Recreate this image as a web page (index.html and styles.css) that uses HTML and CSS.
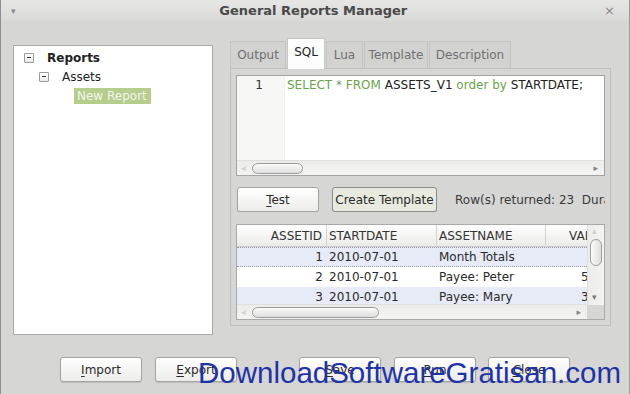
FILE: index.html
```html
<!DOCTYPE html>
<html>
<head>
<meta charset="utf-8">
<link rel="stylesheet" href="styles.css">
</head>
<body>
<div class="window">
  <div class="titlebar">
    <span class="menu-arrow">▾</span>
    <span class="title">General Reports Manager</span>
    <span class="close-x">×</span>
  </div>
  <div class="content">
    <div class="tree">
      <div class="tree-row lvl0"><span class="expander"></span><span class="tree-label bold">Reports</span></div>
      <div class="tree-row lvl1"><span class="expander"></span><span class="tree-label">Assets</span></div>
      <div class="tree-row lvl2"><span class="tree-label selected">New Report</span></div>
    </div>
    <div class="right">
      <div class="tabs">
        <div class="tab t-output">Output</div>
        <div class="tab active t-sql">SQL</div>
        <div class="tab t-lua">Lua</div>
        <div class="tab t-template">Template</div>
        <div class="tab t-desc">Description</div>
      </div>
      <div class="panel">
        <div class="editor">
          <div class="editor-body">
            <div class="gutter"><span class="lineno">1</span></div>
            <div class="code"><span class="kw">SELECT</span> <span class="star">*</span> <span class="kw">FROM</span> ASSETS_V1 <span class="kw">order by</span> STARTDATE;</div>
          </div>
          <div class="hscroll">
            <span class="arr-l">◂</span>
            <span class="thumb-h ed-thumb"></span>
            <span class="arr-r">▸</span>
          </div>
        </div>
        <div class="controls">
          <button class="btn btn-test"><u>T</u>est</button>
          <button class="btn btn-create">Create Template</button>
          <span class="status">Row(s) returned: 23&nbsp;&nbsp;Duration: 0.01s</span>
        </div>
        <div class="grid">
          <div class="grid-main">
            <div class="viewport">
              <div class="grow ghead">
                <div class="c c1">ASSETID</div>
                <div class="c c2">STARTDATE</div>
                <div class="c c3">ASSETNAME</div>
                <div class="c c4 h4">VALUE</div>
              </div>
              <div class="grow alt focus">
                <div class="c c1">1</div>
                <div class="c c2">2010-07-01</div>
                <div class="c c3">Month Totals</div>
                <div class="c c4"></div>
              </div>
              <div class="grow">
                <div class="c c1">2</div>
                <div class="c c2">2010-07-01</div>
                <div class="c c3">Payee: Peter</div>
                <div class="c c4 v4">57.00</div>
              </div>
              <div class="grow alt">
                <div class="c c1">3</div>
                <div class="c c2">2010-07-01</div>
                <div class="c c3">Payee: Mary</div>
                <div class="c c4 v4">32.00</div>
              </div>
            </div>
            <div class="hscroll tbl-h">
              <span class="arr-l">◂</span>
              <span class="thumb-h tb-thumb"></span>
              <span class="arr-r">▸</span>
            </div>
          </div>
          <div class="grid-side">
            <div class="vscroll">
              <span class="arr-u">▴</span>
              <span class="thumb-v"></span>
              <span class="arr-d">▾</span>
            </div>
            <div class="corner"></div>
          </div>
        </div>
      </div>
    </div>
  </div>
  <div class="bottom">
    <button class="btn b-import"><u>I</u>mport</button>
    <button class="btn b-export"><u>E</u>xport</button>
    <button class="btn b-save"><u>S</u>ave</button>
    <button class="btn b-run"><u>R</u>un</button>
    <button class="btn b-close"><u>C</u>lose</button>
  </div>
  <div class="watermark">DownloadSoftwareGratisan.com</div>
</div>
</body>
</html>
```
FILE: styles.css
```css
* { box-sizing: border-box; }
html, body { margin: 0; padding: 0; }
body {
  width: 630px;
  height: 394px;
  overflow: hidden;
  background: #d6d6d4;
  font-family: "DejaVu Sans", sans-serif;
  font-size: 12px;
  color: #2e2e2e;
}
.window {
  position: relative;
  width: 630px;
  height: 394px;
  border-left: 1px solid #8e8e8c;
  border-right: 1px solid #9a9a98;
  background: #d6d6d4;
}
.titlebar {
  height: 21px;
  display: flex;
  align-items: center;
  justify-content: space-between;
  padding: 0 14px 0 10px;
  background: linear-gradient(#e6e6e4, #d9d9d7);
}
.title {
  font-weight: bold;
  font-size: 13px;
  color: #4a4a4a;
  margin-left: 7px;
}
.menu-arrow { color: #8a8a8a; font-size: 9px; }
.close-x { color: #8a8a8a; font-size: 13px; }

.content {
  display: flex;
  align-items: flex-start;
  padding-left: 12px;
  margin-top: 17px;
}
.tree {
  width: 200px;
  height: 290px;
  margin-top: 7px;
  background: #fff;
  border: 1px solid #a9a9a7;
  padding-top: 2px;
}
.tree-row {
  height: 19px;
  display: flex;
  align-items: center;
}
.lvl0 { padding-left: 10px; }
.lvl1 { padding-left: 25px; }
.lvl2 { padding-left: 60px; }
.expander {
  width: 10px;
  height: 10px;
  border: 1px solid #9a9a9a;
  border-radius: 1px;
  background: linear-gradient(#fff, #eaeaea);
  position: relative;
  margin-right: 13px;
}
.expander::after {
  content: "";
  position: absolute;
  left: 2px;
  top: 3px;
  width: 4px;
  height: 1px;
  background: #333;
}
.bold { font-weight: bold; color: #111; }
.tree-label { color: #222; }
.selected {
  background: #b5cd8d;
  color: #f2f6ea;
  padding: 1px 4px 1px 3px;
  line-height: 14px;
}

.right {
  margin-left: 17px;
  width: 381px;
}
.tabs {
  display: flex;
  height: 30px;
  align-items: flex-end;
  position: relative;
  z-index: 2;
}
.tab {
  flex: none;
  height: 27px;
  display: flex;
  align-items: center;
  justify-content: center;
  color: #707070;
  background: #d2d2d0;
  border: 1px solid #c4c4c2;
  border-bottom: none;
  margin-right: 1px;
}
.t-output { width: 56px; }
.t-sql { width: 38px; }
.t-lua { width: 37px; }
.t-template { width: 64px; }
.t-desc { width: 82px; }
.tab.active {
  height: 31px;
  margin-bottom: -1px;
  background: #fdfdfd;
  color: #222;
  border-color: #c8c8c6;
  align-items: flex-start;
  padding-top: 6px;
}
.panel {
  border: 1px solid #bebebc;
  height: 258px;
  padding: 6px 0 0 5px;
  background: #d6d6d4;
}
.editor {
  width: 369px;
  height: 101px;
  border: 1px solid #a3a3a1;
  background: #fff;
  display: flex;
  flex-direction: column;
}
.editor-body {
  flex: 1;
  display: flex;
}
.gutter {
  width: 48px;
  background: #f7f7f6;
  border-right: 1px solid #f0f0ef;
  display: flex;
  justify-content: flex-end;
  padding: 2px 21px 0 0;
}
.code {
  padding: 2px 0 0 2px;
  color: #222;
  white-space: nowrap;
}
.lineno { color: #333; }
.kw { color: #6aa34a; }
.star { color: #7a9a6a; }

.hscroll {
  height: 15px;
  flex: none;
  background: linear-gradient(#ececea, #f4f4f3);
  border-top: 1px solid #e0e0de;
  display: flex;
  align-items: center;
  padding: 0 6px 0 4px;
}
.arr-l { color: #d0d0ce; font-size: 9px; width: 11px; flex: none; }
.arr-r { color: #888; font-size: 9px; margin-left: auto; flex: none; }
.thumb-h {
  flex: none;
  height: 11px;
  border: 1px solid #9c9c9a;
  border-radius: 6px;
  background: linear-gradient(#fbfbfb, #dedede);
}
.ed-thumb { width: 51px; }
.tb-thumb { width: 127px; }

.controls {
  display: flex;
  align-items: center;
  margin-top: 11px;
  height: 25px;
  width: 369px;
  white-space: nowrap;
  overflow: hidden;
}
.btn {
  flex: none;
  font-family: "DejaVu Sans", sans-serif;
  font-size: 12px;
  color: #2a2a2a;
  height: 25px;
  border: 1px solid #a4a4a2;
  border-radius: 3px;
  background: linear-gradient(#ffffff, #ececea);
  box-shadow: 0 1px 1px rgba(0,0,0,0.12);
  padding: 0;
}
.btn u { text-decoration-thickness: 1px; text-underline-offset: 2px; }
.btn-test { width: 82px; margin-left: 1px; }
.btn-create {
  width: 105px;
  margin-left: 13px;
  background: #e8eadf;
  border-color: #8e8e8c;
}
.status { flex: none; margin-left: 18px; color: #3a3a3a; }

.grid {
  margin-top: 12px;
  width: 369px;
  height: 96px;
  border: 1px solid #a9a9a7;
  display: flex;
  background: #fff;
}
.grid-main {
  width: 350px;
  flex: none;
  display: flex;
  flex-direction: column;
}
.viewport {
  height: 80px;
  overflow: hidden;
}
.grow {
  display: flex;
  height: 20px;
  align-items: center;
  white-space: nowrap;
}
.ghead {
  height: 22px;
  background: linear-gradient(#ffffff, #ebebe9);
  border-bottom: 1px solid #c9c9c7;
}
.alt { background: #e6ebf7; }
.focus {
  border-top: 1px dotted #9a9aa0;
  border-bottom: 1px dotted #9a9aa0;
}
.c {
  flex: none;
  overflow: hidden;
  color: #2a2a2a;
}
.ghead .c { height: 22px; line-height: 22px; border-right: 1px solid #d2d2d0; color: #333; }
.c1 { width: 90px; text-align: right; padding-right: 4px; }
.c2 { width: 110px; padding-left: 2px; }
.c3 { width: 109px; padding-left: 2px; }
.c4 { width: 80px; }
.ghead .c4 { border-right: none; }
.h4 { padding-left: 23px; }
.v4 { padding-left: 35px; }
.tbl-h { width: 350px; }

.grid-side {
  width: 17px;
  display: flex;
  flex-direction: column;
}
.vscroll {
  height: 80px;
  background: linear-gradient(90deg, #ececea, #f4f4f3);
  border-left: 1px solid #e0e0de;
  position: relative;
}
.arr-u {
  position: absolute;
  top: 1px;
  left: 4px;
  color: #d0d0ce;
  font-size: 9px;
}
.arr-d {
  position: absolute;
  bottom: 3px;
  left: 4px;
  color: #777;
  font-size: 9px;
}
.thumb-v {
  position: absolute;
  left: 2px;
  top: 14px;
  width: 12px;
  height: 27px;
  border: 1px solid #9c9c9a;
  border-radius: 6px;
  background: linear-gradient(90deg, #fbfbfb, #dedede);
}
.corner { flex: 1; background: #d6d6d4; }

.bottom {
  display: flex;
  margin-top: 22px;
  padding-left: 59px;
}
.bottom .btn { width: 82px; }
.b-export { margin-left: 13px; }
.b-save { margin-left: 62px; }
.b-run { margin-left: 13px; }
.b-close { margin-left: 12px; }

.watermark {
  position: absolute;
  left: 197px;
  top: 356px;
  font-family: "Liberation Sans", Arial, sans-serif;
  font-size: 29.5px;
  color: #1f33a6;
  white-space: nowrap;
}
```
